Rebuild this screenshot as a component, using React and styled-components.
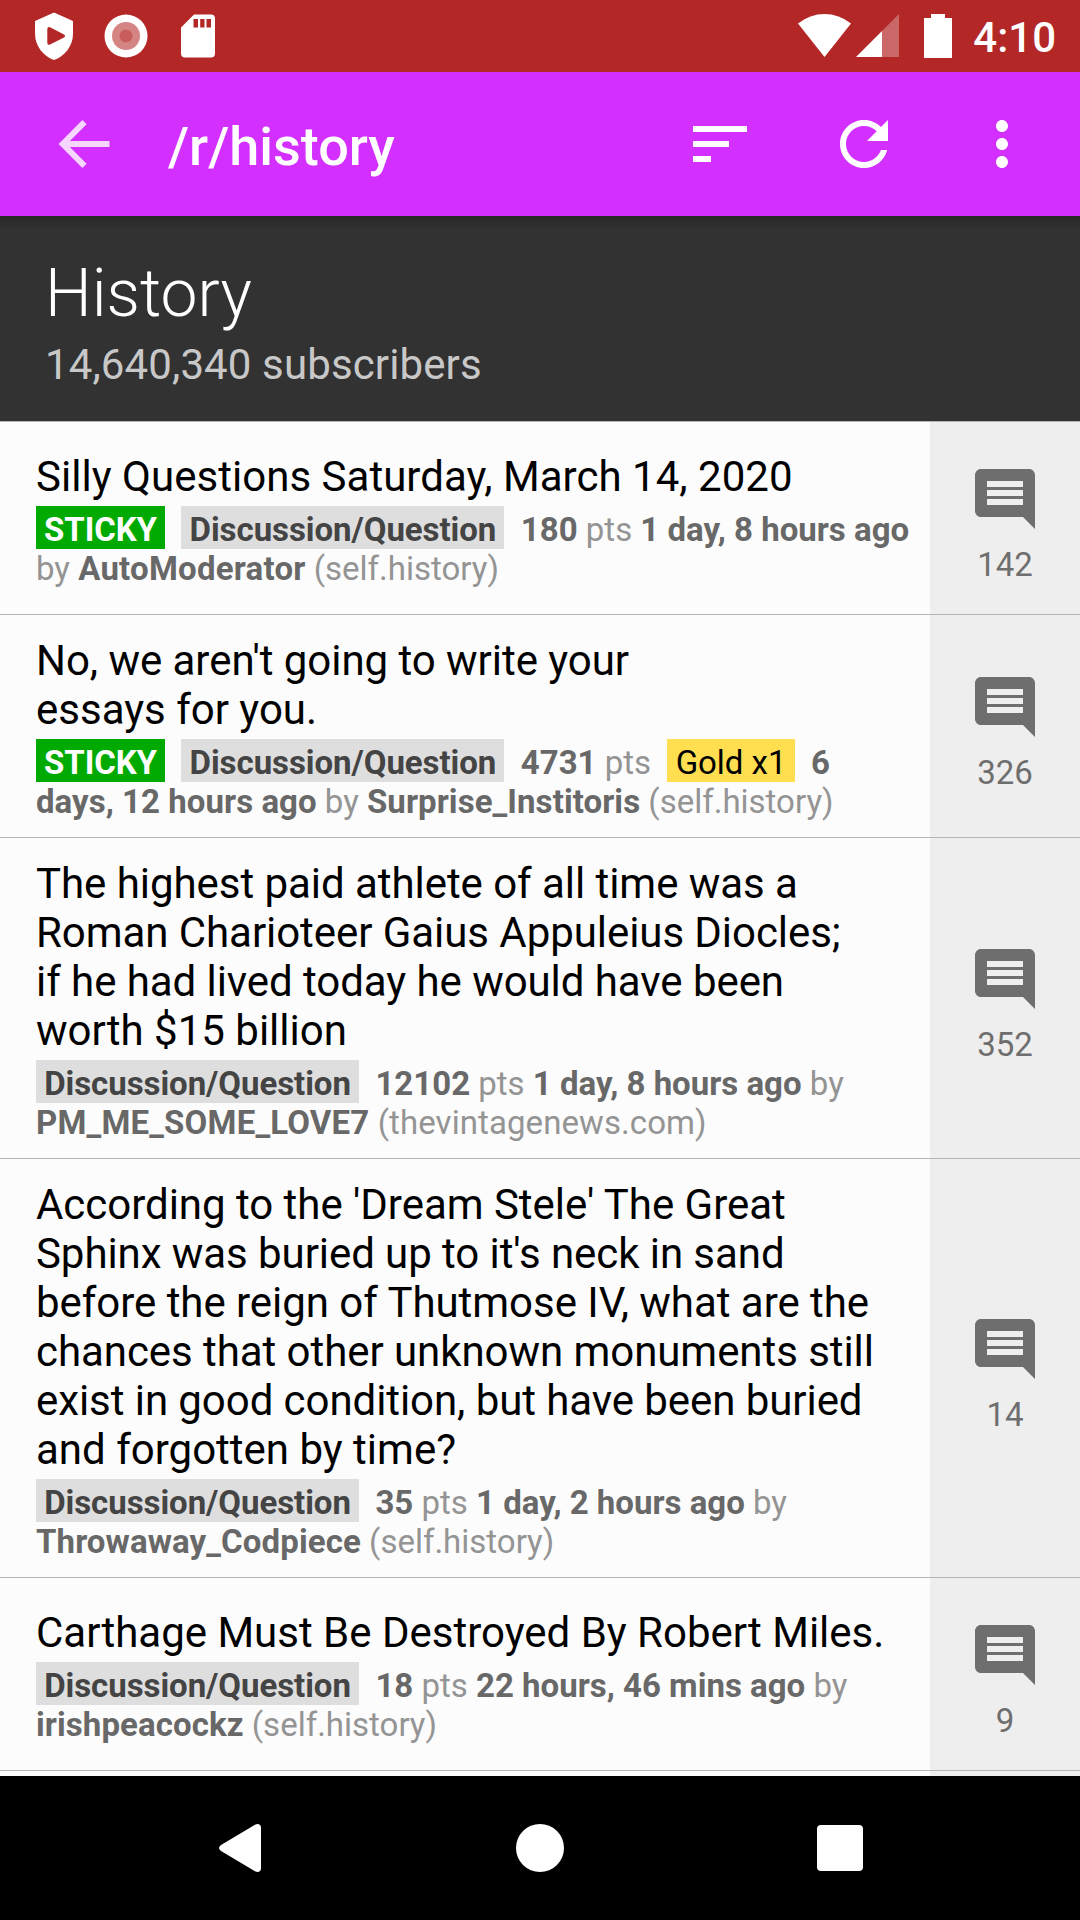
import React from "react";
import styled, { createGlobalStyle } from "styled-components";

const GlobalStyle = createGlobalStyle`
  * { box-sizing: border-box; }
  body { margin: 0; background: #000; font-family: Roboto, "Noto Sans", sans-serif; }
`;

const Screen = styled.div`
  display: flex;
  flex-direction: column;
  width: 1080px;
  height: 1920px;
  overflow: hidden;
  background: #fcfcfc;
`;

const StatusBar = styled.header`
  display: flex;
  flex: none;
  align-items: center;
  justify-content: space-between;
  height: 72px;
  padding: 0 24px 0 18px;
  background: #b42727;
  color: #fff;
`;

const StatusGroup = styled.div`
  display: flex;
  align-items: center;
`;

const Clock = styled.span`
  margin-left: 12px;
  padding-top: 3px;
  font-size: 42px;
  font-weight: 500;
  line-height: 49px;
`;

const Glyph = styled.svg`
  display: block;
  flex: none;
  width: ${(p) => p.$w}px;
  height: ${(p) => p.$h || p.$w}px;
`;

const Toolbar = styled.nav`
  display: flex;
  flex: none;
  align-items: center;
  height: 144px;
  padding-left: 48px;
  background: #d32fff;
  color: #fff;
`;

const ToolbarTitle = styled.h1`
  flex: 1;
  margin: 0;
  padding: 5px 0 0 48px;
  font-size: 54px;
  font-weight: 500;
  line-height: 64px;
`;

const IconButton = styled.button`
  display: flex;
  align-items: center;
  justify-content: center;
  width: 144px;
  height: 144px;
  padding: 0 ${(p) => p.$inset || 0}px 0 0;
  border: 0;
  background: none;
  color: inherit;
`;

const Banner = styled.section`
  flex: none;
  height: 205px;
  padding: 39px 45px 0;
  background: linear-gradient(#272727, #323232 14px);
  color: #fff;
`;

const BannerTitle = styled.h2`
  margin: 0;
  font-size: 66px;
  font-weight: 300;
  line-height: 78px;
`;

const BannerCount = styled.p`
  margin: 7px 0 0;
  color: #c8c8c8;
  font-size: 42px;
  letter-spacing: 0.12px;
  line-height: 49px;
`;

const PostList = styled.main`
  flex: 1;
  min-height: 0;
  overflow: hidden;
`;

const PostRow = styled.article`
  display: flex;
  min-height: 193px;
  border-top: 1px solid #b4b4b4;
`;

const PostBody = styled.div`
  display: flex;
  flex: 1;
  flex-direction: column;
  justify-content: center;
  gap: 9px;
  padding: 21px 0 ${(p) => (p.$compact ? 17 : 16)}px 36px;
  white-space: nowrap;
`;

const PostTitle = styled.h3`
  margin: 0;
  color: #000;
  font-size: 42px;
  font-weight: 400;
  line-height: 49px;
`;

const TitleLine = styled.span`
  display: block;
  letter-spacing: ${(p) => p.$track}px;
`;

const Meta = styled.p`
  margin: 0;
  color: #949494;
  font-size: 33px;
  line-height: 39px;
  white-space: pre;
`;

const Strong = styled.b`
  color: #686868;
  font-weight: 700;
  letter-spacing: ${(p) => p.$track || 0}px;
`;

const Domain = styled.span`
  letter-spacing: ${(p) => p.$track || 0}px;
`;

const tones = {
  sticky: { bg: "#00aa00", fg: "#fff", weight: 700, track: -0.104 },
  flair: { bg: "#dedede", fg: "#444", weight: 700, track: -0.06 },
  gold: { bg: "#ffdf50", fg: "#000", weight: 400, track: -0.04 },
};

const Tag = styled.span`
  padding-top: 4px;
  background: ${(p) => tones[p.$tone].bg};
  color: ${(p) => tones[p.$tone].fg};
  font-weight: ${(p) => tones[p.$tone].weight};
  letter-spacing: ${(p) => tones[p.$tone].track}px;
`;

const Comments = styled.aside`
  display: flex;
  flex: none;
  flex-direction: column;
  align-items: center;
  justify-content: center;
  gap: 10px;
  width: 150px;
  padding-top: 11px;
  background: #eee;
  color: #6e6e6e;
  font-size: 33px;
  line-height: 39px;
`;

const NavBar = styled.footer`
  display: flex;
  flex: none;
  align-items: center;
  justify-content: center;
  gap: 156px;
  height: 144px;
  background: #000;
  color: #fff;
`;

const NBSP = "\u00a0";
const Label = ({ tone, children }) => <Tag $tone={tone}>{NBSP}{children}{NBSP}</Tag>;
const Flair = () => <Label tone="flair">Discussion/Question</Label>;
const Sticky = () => <Label tone="sticky">STICKY</Label>;

// Each title line is a pair: its text and its letter spacing in px.
const posts = [
  {
    title: [["Silly Questions Saturday, March 14, 2020", 0.03]],
    comments: 142,
    meta: (
      <>
        <Sticky />{"  "}<Flair />{"  "}<Strong>180</Strong> pts <Strong>1 day, 8 hours ago</Strong>
        <br />by <Strong $track={0.23}>AutoModerator</Strong> (self.history)
      </>
    ),
  },
  {
    title: [["No, we aren't going to write your", -0.04], ["essays for you.", 0]],
    comments: 326,
    meta: (
      <>
        <Sticky />{"  "}<Flair />{"  "}<Strong>4731</Strong> pts{"  "}<Label tone="gold">Gold x1</Label>{"  "}<Strong>6</Strong>
        <br /><Strong $track={0.04}>days, 12 hours ago</Strong> by <Strong $track={0.07}>Surprise_Institoris</Strong> (self.history)
      </>
    ),
  },
  {
    title: [
      ["The highest paid athlete of all time was a", -0.05],
      ["Roman Charioteer Gaius Appuleius Diocles;", -0.06],
      ["if he had lived today he would have been", -0.06],
      ["worth $15 billion", 0],
    ],
    comments: 352,
    meta: (
      <>
        <Flair />{"  "}<Strong>12102</Strong> pts <Strong>1 day, 8 hours ago</Strong> by
        <br /><Strong $track={0.19}>PM_ME_SOME_LOVE7</Strong> <Domain $track={0.08}>(thevintagenews.com)</Domain>
      </>
    ),
  },
  {
    title: [
      ["According to the 'Dream Stele' The Great", -0.03],
      ["Sphinx was buried up to it's neck in sand", -0.07],
      ["before the reign of Thutmose IV, what are the", -0.04],
      ["chances that other unknown monuments still", -0.06],
      ["exist in good condition, but have been buried", -0.07],
      ["and forgotten by time?", 0],
    ],
    comments: 14,
    meta: (
      <>
        <Flair />{"  "}<Strong>35</Strong> pts <Strong>1 day, 2 hours ago</Strong> by
        <br /><Strong $track={0.11}>Throwaway_Codpiece</Strong> (self.history)
      </>
    ),
  },
  {
    title: [["Carthage Must Be Destroyed By Robert Miles.", 0]],
    comments: 9,
    meta: (
      <>
        <Flair />{"  "}<Strong>18</Strong> pts <Strong>22 hours, 46 mins ago</Strong> by
        <br /><Strong $track={0.09}>irishpeacockz</Strong> (self.history)
      </>
    ),
  },
];

const CommentIcon = () => (
  <Glyph $w={72} viewBox="0 0 24 24" fill="currentColor">
    <path d="M22 4c0-1.1-.9-2-2-2H4c-1.1 0-2 .9-2 2v12c0 1.1.9 2 2 2h14l4 4V4zM18 14H6v-2h12v2zm0-3H6V9h12v2zm0-3H6V6h12v2z" />
  </Glyph>
);

const Post = ({ post }) => (
  <PostRow>
    <PostBody $compact={post.title.length === 1}>
      <PostTitle>
        {post.title.map(([text, track]) => (
          <TitleLine key={text} $track={track}>{text}</TitleLine>
        ))}
      </PostTitle>
      <Meta>{post.meta}</Meta>
    </PostBody>
    <Comments>
      <CommentIcon />
      <span>{post.comments}</span>
    </Comments>
  </PostRow>
);

export default function App() {
  return (
    <Screen>
      <GlobalStyle />
      <StatusBar>
        <StatusGroup>
          <Glyph $w={210} $h={72} viewBox="18 0 210 72" fill="#fff">
            <path fillRule="evenodd" d="M54 12.5L73 21V34C73 46 64 57 54 60C44 57 35 46 35 34V21ZM50 27.300Q47.300 26.300 47.300 29.500V42.500Q47.300 45.500 50 44.500L64 37.500Q66 36 64 34.500Z" />
            <circle cx="126" cy="36" r="21.500" />
            <circle cx="126" cy="36" r="14" fill="#d58484" />
            <circle cx="126" cy="36" r="6.500" fill="#c95d5d" />
            <path fillRule="evenodd" d="M194 14.500H211Q215 14.500 215 18.500V53.500Q215 57.500 211 57.500H185Q181 57.500 181 53.500V27.500ZM193.500 19V27.500H198V19ZM200.200 19V27.500H204.500V19ZM206.500 19V27.500H211V19Z" />
          </Glyph>
        </StatusGroup>
        <StatusGroup>
          <Glyph $w={170} $h={72} viewBox="790 0 170 72" fill="#fff">
            <path d="M797 23.500Q809 14 823.500 14Q838 14 850 23.500L823.500 57Z" />
            <path d="M898 14V57H881V31Z" fillOpacity=".3" />
            <path d="M881 31V57H855Z" />
            <path d="M930 14H944V18H951V58H923V18H930Z" />
          </Glyph>
          <Clock>4:10</Clock>
        </StatusGroup>
      </StatusBar>
      <Toolbar>
        <Glyph $w={72} viewBox="48 108 72 72" fill="none" stroke="#fff" strokeWidth="6" opacity=".8">
          <path d="M84.500 122.200L62.800 144L84.500 165.800M62.800 144H109.500" />
        </Glyph>
        <ToolbarTitle>/r/history</ToolbarTitle>
        <IconButton>
          <Glyph $w={72} viewBox="0 0 24 24" fill="currentColor">
            <path d="M3 18h6v-2H3v2zM3 6v2h18V6H3zm0 7h12v-2H3v2z" />
          </Glyph>
        </IconButton>
        <IconButton>
          <Glyph $w={72} viewBox="0 0 24 24" fill="currentColor">
            <path d="M17.650 6.350C16.200 4.900 14.210 4 12 4c-4.420 0-7.990 3.580-7.990 8s3.570 8 7.990 8c3.730 0 6.840-2.550 7.730-6h-2.080c-.82 2.330-3.040 4-5.650 4-3.310 0-6-2.690-6-6s2.690-6 6-6c1.660 0 3.140.69 4.220 1.780L13 11h7V4l-2.350 2.350z" />
          </Glyph>
        </IconButton>
        <IconButton $inset={12}>
          <Glyph $w={72} viewBox="0 0 24 24" fill="currentColor">
            <path d="M12 8c1.100 0 2-.9 2-2s-.9-2-2-2-2 .9-2 2 .9 2 2 2zm0 2c-1.100 0-2 .9-2 2s.9 2 2 2 2-.9 2-2-.9-2-2-2zm0 6c-1.100 0-2 .9-2 2s.9 2 2 2 2-.9 2-2-.9-2-2-2z" />
          </Glyph>
        </IconButton>
      </Toolbar>
      <Banner>
        <BannerTitle>History</BannerTitle>
        <BannerCount>14,640,340 subscribers</BannerCount>
      </Banner>
      <PostList>
        {posts.map((post) => <Post key={post.title[0][0]} post={post} />)}
        <PostRow><PostBody /><Comments /></PostRow>
      </PostList>
      <NavBar>
        <Glyph $w={144} viewBox="168 0 144 144" fill="currentColor">
          <path d="M255 48.800C258 47 261 48.500 261 51.500V92.500C261 95.500 258 97 255 95.200L221 75Q217 72 221 69Z" />
        </Glyph>
        <Glyph $w={144} viewBox="0 0 144 144" fill="currentColor"><circle cx="72" cy="72" r="24" /></Glyph>
        <Glyph $w={144} viewBox="0 0 144 144" fill="currentColor"><rect x="49" y="49" width="46" height="46" rx="4" /></Glyph>
      </NavBar>
    </Screen>
  );
}
